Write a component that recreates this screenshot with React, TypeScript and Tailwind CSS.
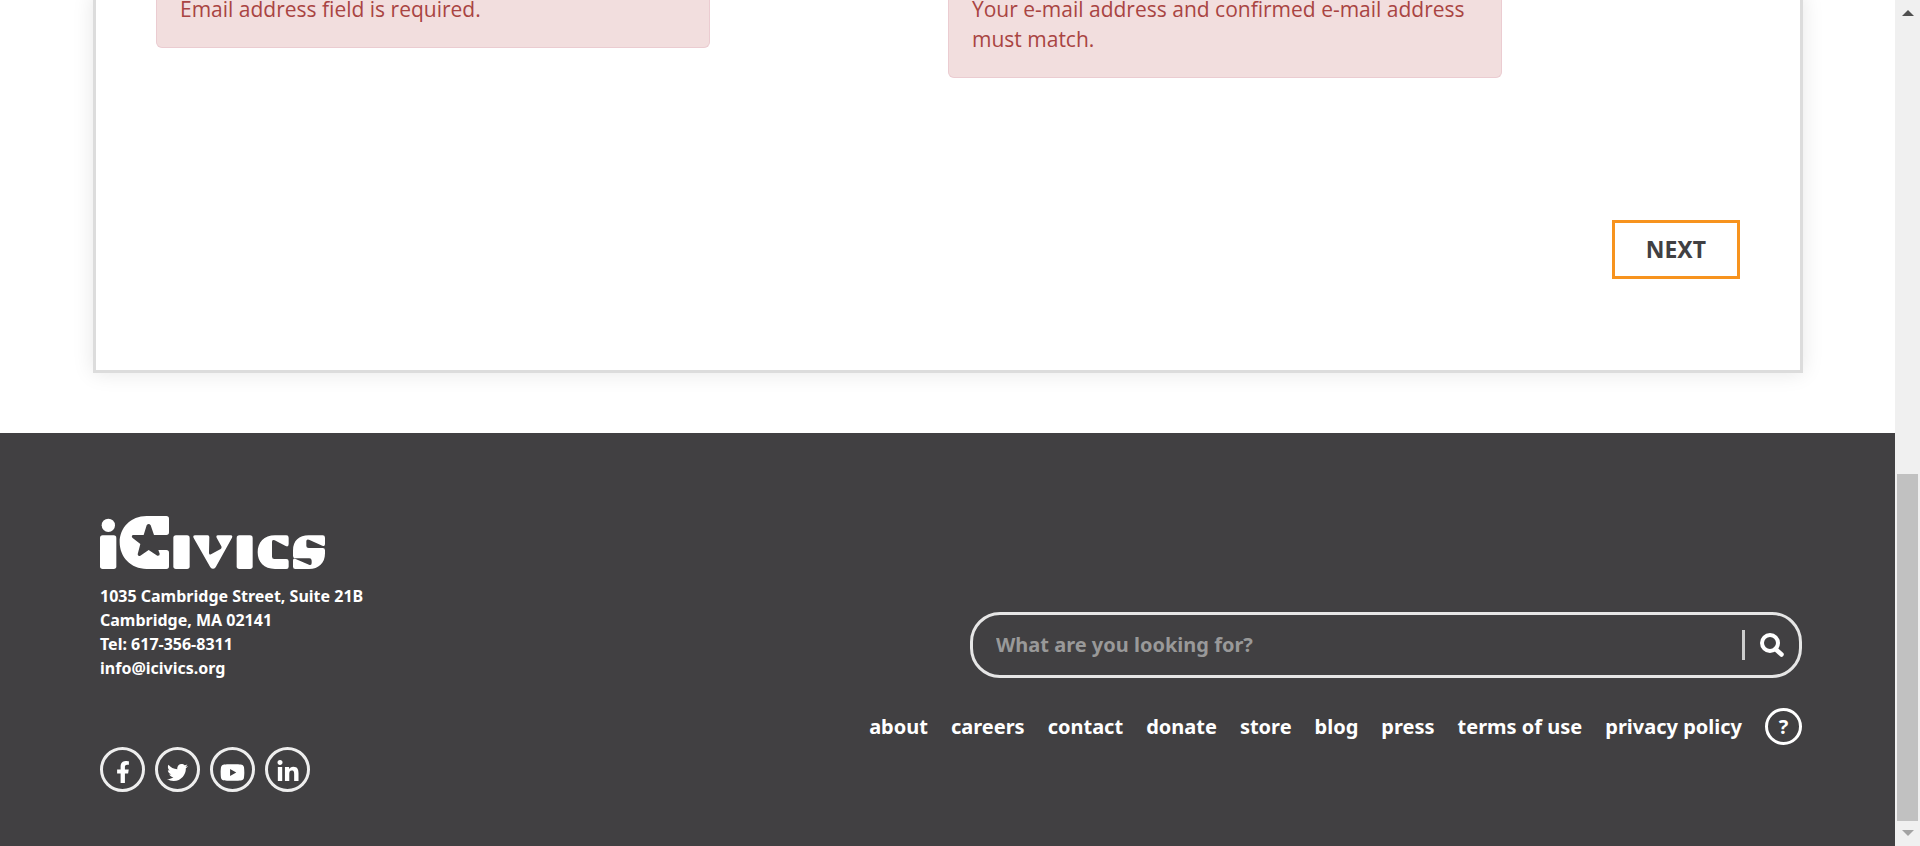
import React from "react";
import { FaFacebookF, FaTwitter, FaYoutube, FaLinkedinIn } from "react-icons/fa";

const links = ["about", "careers", "contact", "donate", "store", "blog", "press", "terms of use", "privacy policy"];

const socials = [
  { label: "Facebook", Icon: FaFacebookF, size: 22 },
  { label: "Twitter", Icon: FaTwitter, size: 21 },
  { label: "YouTube", Icon: FaYoutube, size: 25 },
  { label: "LinkedIn", Icon: FaLinkedinIn, size: 24 },
];

function Alert({ children }: { children: React.ReactNode }) {
  return (
    <div className="flex-1">
      <p
        role="alert"
        className="w-[70%] rounded-b-md border-x border-b border-[#ebccd1] bg-[#f2dede] px-[23px] pb-[23px] text-[21px] leading-[30px] text-[#a94442]"
      >
        {children}
      </p>
    </div>
  );
}

function Logo() {
  return (
    <svg viewBox="60 48 675 159" className="h-[53px] w-[225px] fill-white" role="img" aria-label="iCivics">
      <circle cx="85" cy="76" r="20" />
      <rect x="60" y="106" width="49" height="101" rx="8" />
      <path
        fillRule="evenodd"
        d="M200 48H259Q267 48 267 56V97Q267 105 259 105H222L212 76Q206 68 200 76L191 105H158Q153 108 157 113L181 132L173 163Q174 170 181 167L206 150L232 167Q240 168 239 161L235 150H259Q267 150 267 158V199Q267 207 259 207H200C152 207 119 171 119 127S152 48 200 48Z"
      />
      <rect x="280" y="106" width="49" height="101" rx="8" />
      <path d="M346 106H383Q388 106 388 111L387 158Q387 166 393 163L422 147Q426 144 424 139L410 113Q407 106 414 106H452Q459 106 456 113L407 202Q399 211 391 202L341 114Q337 106 346 106Z" />
      <rect x="470" y="106" width="48" height="101" rx="8" />
      <path d="M585 106H619Q626 106 626 113V132Q626 142 617 138L584 121Q576 117 576 126V170Q576 177 583 177H619Q626 177 626 184V200Q626 207 619 207H585C552 207 533 186 533 157S552 106 585 106Z" />
      <path d="M686 106H728Q735 106 735 113V132Q735 141 727 137L687 119Q679 116 679 124V138Q679 144 686 144H728Q735 144 735 151V160C735 190 716 207 687 207H646Q639 207 639 200V182Q639 173 647 177L687 194Q695 197 695 189V182Q695 175 688 175H646Q639 175 639 168V152C639 122 657 106 686 106Z" />
    </svg>
  );
}

export default function App() {
  return (
    <div className="flex min-h-screen bg-white font-['Noto_Sans',sans-serif] text-white">
      <div className="flex min-w-0 flex-1 flex-col">
        <main className="overflow-hidden pr-[92px] pb-[60px] pl-[93px]">
          <section className="border-x-[3px] border-b-[3px] border-[#dcdcdc] px-[60px] pb-[91px] shadow-[0_0_20px_rgba(0,0,0,0.1)]">
            <div className="-mt-[6px] flex items-start font-['Open_Sans',sans-serif]">
              <Alert>Email address field is required.</Alert>
              <Alert>Your e-mail address and confirmed e-mail address must match.</Alert>
            </div>
            <div className="mt-[142px] flex justify-end">
              <button className="border-[3px] border-[#f7931e] bg-white px-[31px] py-3 text-[23px] leading-[29px] font-bold text-[#414042]">
                NEXT
              </button>
            </div>
          </section>
        </main>

        <footer className="flex flex-1 justify-between bg-[#414042] pr-[93px] pl-[100px]">
          <div className="flex flex-col pt-[83px]">
            <Logo />
            <address className="mt-[15px] text-base leading-6 font-bold not-italic">
              1035 Cambridge Street, Suite 21B
              <br />
              Cambridge, MA 02141
              <br />
              Tel: 617-356-8311
              <br />
              <a href="mailto:info@icivics.org">info@icivics.org</a>
            </address>
            <div className="mt-[67px] flex gap-[10px]">
              {socials.map(({ label, Icon, size }) => (
                <a
                  key={label}
                  href="#"
                  aria-label={label}
                  className="flex size-[45px] items-center justify-center rounded-full border-[3px] border-[#eeeeee] pt-[5px]"
                >
                  <Icon size={size} />
                </a>
              ))}
            </div>
          </div>

          <div className="flex flex-col items-end pt-[179px]">
            <form className="flex h-[66px] w-[832px] items-center rounded-[30px] border-[3px] border-[#e6e6e6] pr-[15px] pl-[23px]">
              <input
                type="search"
                aria-label="What are you looking for?"
                placeholder="What are you looking for?"
                className="min-w-0 flex-1 bg-transparent text-xl font-bold outline-none placeholder:text-[#999999]"
              />
              <span className="h-[30px] w-[3px] bg-[#cccccc]" />
              <button type="button" aria-label="Search" className="ml-[15px]">
                <svg viewBox="0 0 24 24" className="size-6 fill-none stroke-white" strokeWidth="4">
                  <circle cx="10" cy="10" r="8" />
                  <path d="M15.5 16L21.5 21.5" strokeWidth="4.5" strokeLinecap="round" />
                </svg>
              </button>
            </form>
            <nav className="mt-[30px] flex items-center gap-[23px] text-xl leading-7 font-bold">
              {links.map((link) => (
                <a key={link} href="#">
                  {link}
                </a>
              ))}
              <a
                href="#"
                aria-label="Help"
                className="flex size-[37px] items-center justify-center rounded-full border-[3px] border-white"
              >
                ?
              </a>
            </nav>
          </div>
        </footer>
      </div>

      <div aria-hidden="true" className="flex w-[25px] flex-col items-center bg-[#f0f0f0]">
        <svg viewBox="0 0 12 6" className="mt-[10px] h-[6px] w-3 fill-[#505050]">
          <path d="M0 6L6 0L12 6Z" />
        </svg>
        <div className="mt-auto h-[347px] w-[21px] bg-[#c1c1c1]" />
        <svg viewBox="0 0 12 6" className="mt-[9px] mb-[10px] h-[6px] w-3 fill-[#a3a3a3]">
          <path d="M0 0L6 6L12 0Z" />
        </svg>
      </div>
    </div>
  );
}
